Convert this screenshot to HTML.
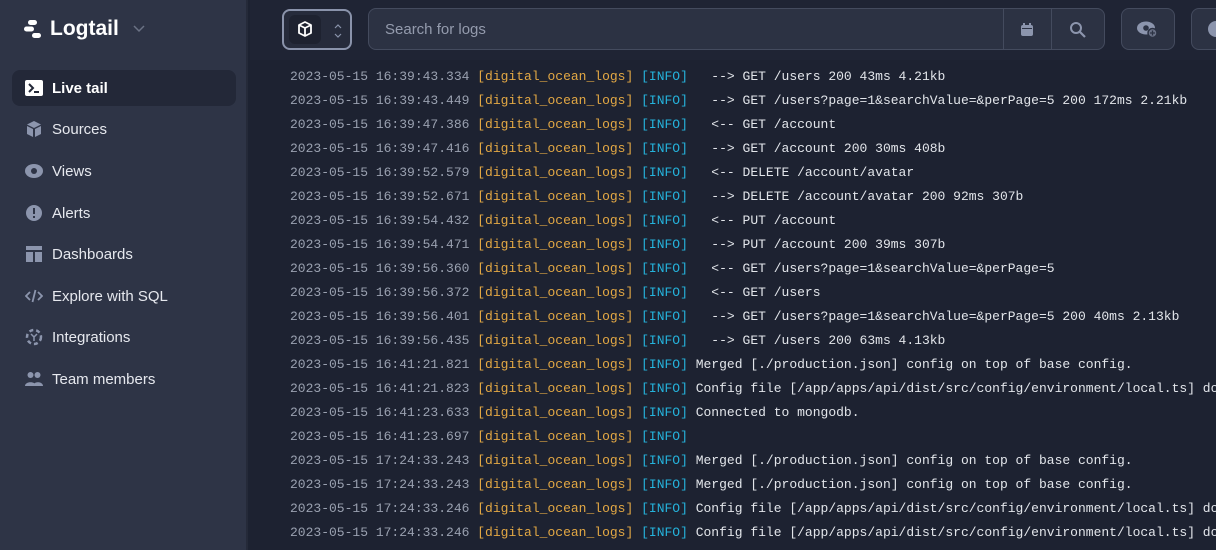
<!DOCTYPE html>
<html><head><meta charset="utf-8"><style>
*{margin:0;padding:0;box-sizing:border-box}
html,body{overflow:hidden}
body{width:1216px;height:550px;background:#1d2231;font-family:"Liberation Sans",sans-serif;position:relative}
.side{position:absolute;left:0;top:0;width:248px;height:550px;background:#2e3446;border-right:2px solid #252a39}
.logo{position:absolute;left:24px;top:17px;display:flex;align-items:center;color:#fff;font-weight:bold;font-size:21px}
.nav{position:absolute;left:12px;width:224px;height:36px;display:flex;align-items:center;padding-left:13px;color:#e6e8ee;font-size:15px}
.nav svg{margin-right:9px}
.nav.act{background:#232838;border-radius:8px;color:#fff;font-weight:bold}
.top{position:absolute;left:250px;top:0;width:966px;height:60px;background:#1f2434;overflow:hidden}
.box{position:absolute;border:1px solid #444b5e;border-radius:8px;background:#2c3243}
.logs{position:absolute;left:290px;top:65px;width:926px;overflow:hidden;font-family:"Liberation Mono",monospace;font-size:13px;line-height:24px;white-space:pre;color:#e2e5ea}
.t{color:#9aa1b0}.o{color:#e3a844}.c{color:#25b3dc}
</style></head><body>
<div class="side">
 <div class="logo"><svg width="20" height="20" viewBox="0 0 20 20" fill="#fff"><rect x="4" y="1" width="9" height="5" rx="2.5"/><rect x="0" y="7.5" width="10" height="5" rx="2.5"/><rect x="8" y="14" width="9" height="5" rx="2.5"/></svg><span style="margin-left:6px">Logtail</span><svg style="margin-left:14px" width="12" height="8" viewBox="0 0 12 8"><path d="M1 1l5 5 5-5" stroke="#6b7285" stroke-width="1.5" fill="none"/></svg></div>
 <div class="nav act" style="top:70px"><svg width="18" height="16"><rect width="18" height="16" rx="2" fill="#fff"/><path d="M4 4l4 4-4 4M9 12h5" stroke="#232838" stroke-width="2" fill="none"/></svg>Live tail</div>
 <div class="nav" style="top:111px"><svg width="18" height="18" viewBox="0 0 18 18" fill="#8c95ad"><path d="M9 1l7 3.5-7 3.5-7-3.5z"/><path d="M2 6l6 3v8l-6-3zM16 6l-6 3v8l6-3z"/></svg>Sources</div>
 <div class="nav" style="top:153px"><svg width="18" height="14" viewBox="0 0 18 14"><ellipse cx="9" cy="7" rx="9" ry="7" fill="#8c95ad"/><circle cx="9" cy="7" r="3" fill="#2e3446"/></svg>Views</div>
 <div class="nav" style="top:195px"><svg width="18" height="18"><circle cx="9" cy="9" r="8" fill="#8c95ad"/><rect x="8" y="4" width="2" height="6" fill="#2e3446"/><rect x="8" y="12" width="2" height="2" fill="#2e3446"/></svg>Alerts</div>
 <div class="nav" style="top:236px"><svg width="18" height="18" fill="#8c95ad"><rect x="1" y="1" width="16" height="4"/><rect x="1" y="7" width="7" height="10"/><rect x="10" y="7" width="7" height="10"/></svg>Dashboards</div>
 <div class="nav" style="top:278px"><svg width="18" height="14" viewBox="0 0 18 14"><path d="M5 3L1 7l4 4M13 3l4 4-4 4M10.5 1l-3 12" stroke="#8c95ad" stroke-width="1.8" fill="none"/></svg>Explore with SQL</div>
 <div class="nav" style="top:319px"><svg width="18" height="18"><circle cx="9" cy="9" r="7" stroke="#8c95ad" stroke-width="2.5" stroke-dasharray="4 3" fill="none"/><path d="M6 6l3 3 3-3M9 9v4" stroke="#8c95ad" stroke-width="1.5" fill="none"/></svg>Integrations</div>
 <div class="nav" style="top:361px"><svg width="18" height="16" fill="#8c95ad"><circle cx="5.5" cy="4" r="3"/><circle cx="12.5" cy="4" r="3"/><path d="M0 15c0-5 11-5 11 0zM8 15c0-5 10-5 10 0z"/></svg>Team members</div>
</div>
<div class="top">
 <div class="box" style="left:32px;top:9px;width:70px;height:41px;border:2px solid #8a93ab;background:#262b3b"><div style="position:absolute;left:5px;top:4px;width:32px;height:29px;background:#1e2230;border-radius:6px"></div><svg style="position:absolute;left:13px;top:10px" width="16" height="16" viewBox="0 0 16 16"><path d="M8 1l6 3v8l-6 3-6-3V4zM2 4l6 3 6-3M8 7v8" stroke="#fff" stroke-width="1.8" fill="none" stroke-linejoin="round"/></svg><svg style="position:absolute;left:50px;top:12px" width="8" height="16"><path d="M1 5l3-3 3 3M1 11l3 3 3-3" stroke="#8a93ab" stroke-width="1.2" fill="none"/></svg></div>
 <div class="box" style="left:118px;top:8px;width:737px;height:42px"><span style="position:absolute;left:16px;top:12px;color:#949bad;font-size:15px">Search for logs</span><div style="position:absolute;left:634px;top:0;height:40px;border-left:1px solid #444b5e;width:48px"></div><div style="position:absolute;left:682px;top:0;height:40px;border-left:1px solid #444b5e"></div><svg style="position:absolute;left:651px;top:14px" width="14" height="14" fill="#8c95ad"><rect x="1" y="2" width="12" height="11" rx="2"/><rect x="3" y="0" width="2" height="3"/><rect x="9" y="0" width="2" height="3"/><rect x="2" y="5" width="10" height="1" fill="#2c3243"/></svg><svg style="position:absolute;left:700px;top:12px" width="18" height="18"><circle cx="7" cy="7" r="5" stroke="#8c95ad" stroke-width="2" fill="none"/><path d="M11 11l5 5" stroke="#8c95ad" stroke-width="2.2"/></svg></div>
 <div class="box" style="left:871px;top:8px;width:54px;height:42px"><svg style="position:absolute;left:15px;top:12px" width="22" height="18"><ellipse cx="9" cy="7" rx="9" ry="6.5" fill="#8c95ad"/><circle cx="9" cy="7" r="2.8" fill="#2c3243"/><circle cx="15.5" cy="12" r="4.5" fill="#6a7186" stroke="#2c3243" stroke-width="1.5"/><path d="M15.5 9.5v5M13 12h5" stroke="#2c3243" stroke-width="1.3"/></svg></div>
 <div class="box" style="left:941px;top:8px;width:60px;height:42px"><div style="position:absolute;left:16px;top:12px;width:16px;height:16px;border-radius:50%;background:#8c95ad"></div></div>
</div>
<div class="logs"><span class="t">2023-05-15 16:39:43.334</span> <span class="o">[digital_ocean_logs]</span> <span class="c">[INFO]</span>   --&gt; GET /users 200 43ms 4.21kb
<span class="t">2023-05-15 16:39:43.449</span> <span class="o">[digital_ocean_logs]</span> <span class="c">[INFO]</span>   --&gt; GET /users?page=1&amp;searchValue=&amp;perPage=5 200 172ms 2.21kb
<span class="t">2023-05-15 16:39:47.386</span> <span class="o">[digital_ocean_logs]</span> <span class="c">[INFO]</span>   &lt;-- GET /account
<span class="t">2023-05-15 16:39:47.416</span> <span class="o">[digital_ocean_logs]</span> <span class="c">[INFO]</span>   --&gt; GET /account 200 30ms 408b
<span class="t">2023-05-15 16:39:52.579</span> <span class="o">[digital_ocean_logs]</span> <span class="c">[INFO]</span>   &lt;-- DELETE /account/avatar
<span class="t">2023-05-15 16:39:52.671</span> <span class="o">[digital_ocean_logs]</span> <span class="c">[INFO]</span>   --&gt; DELETE /account/avatar 200 92ms 307b
<span class="t">2023-05-15 16:39:54.432</span> <span class="o">[digital_ocean_logs]</span> <span class="c">[INFO]</span>   &lt;-- PUT /account
<span class="t">2023-05-15 16:39:54.471</span> <span class="o">[digital_ocean_logs]</span> <span class="c">[INFO]</span>   --&gt; PUT /account 200 39ms 307b
<span class="t">2023-05-15 16:39:56.360</span> <span class="o">[digital_ocean_logs]</span> <span class="c">[INFO]</span>   &lt;-- GET /users?page=1&amp;searchValue=&amp;perPage=5
<span class="t">2023-05-15 16:39:56.372</span> <span class="o">[digital_ocean_logs]</span> <span class="c">[INFO]</span>   &lt;-- GET /users
<span class="t">2023-05-15 16:39:56.401</span> <span class="o">[digital_ocean_logs]</span> <span class="c">[INFO]</span>   --&gt; GET /users?page=1&amp;searchValue=&amp;perPage=5 200 40ms 2.13kb
<span class="t">2023-05-15 16:39:56.435</span> <span class="o">[digital_ocean_logs]</span> <span class="c">[INFO]</span>   --&gt; GET /users 200 63ms 4.13kb
<span class="t">2023-05-15 16:41:21.821</span> <span class="o">[digital_ocean_logs]</span> <span class="c">[INFO]</span> Merged [./production.json] config on top of base config.
<span class="t">2023-05-15 16:41:21.823</span> <span class="o">[digital_ocean_logs]</span> <span class="c">[INFO]</span> Config file [/app/apps/api/dist/src/config/environment/local.ts] does not exist
<span class="t">2023-05-15 16:41:23.633</span> <span class="o">[digital_ocean_logs]</span> <span class="c">[INFO]</span> Connected to mongodb.
<span class="t">2023-05-15 16:41:23.697</span> <span class="o">[digital_ocean_logs]</span> <span class="c">[INFO]</span>
<span class="t">2023-05-15 17:24:33.243</span> <span class="o">[digital_ocean_logs]</span> <span class="c">[INFO]</span> Merged [./production.json] config on top of base config.
<span class="t">2023-05-15 17:24:33.243</span> <span class="o">[digital_ocean_logs]</span> <span class="c">[INFO]</span> Merged [./production.json] config on top of base config.
<span class="t">2023-05-15 17:24:33.246</span> <span class="o">[digital_ocean_logs]</span> <span class="c">[INFO]</span> Config file [/app/apps/api/dist/src/config/environment/local.ts] does not exist
<span class="t">2023-05-15 17:24:33.246</span> <span class="o">[digital_ocean_logs]</span> <span class="c">[INFO]</span> Config file [/app/apps/api/dist/src/config/environment/local.ts] does not exist</div>
</body></html>
